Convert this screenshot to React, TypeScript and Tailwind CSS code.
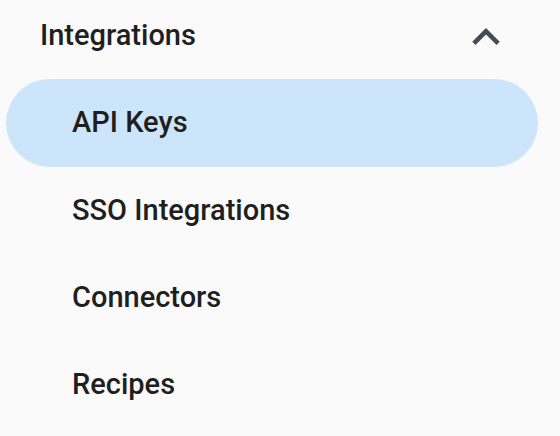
const items = ["API Keys", "SSO Integrations", "Connectors", "Recipes"];

function ExpandLess() {
  return (
    <svg viewBox="6 8 12 7.41" className="h-[17px] w-[28px]" fill="#474c54">
      <path d="M12 8l-6 6 1.41 1.41L12 10.83l4.59 4.58L18 14z" />
    </svg>
  );
}

export default function App() {
  const active = "API Keys";

  return (
    <div className="h-[436px] w-[560px] overflow-hidden bg-[#fafafa] font-['Roboto',sans-serif] text-[#1f1f1f]">
      <div className="flex h-[72px] items-center justify-between pl-[40px] pr-[60px]">
        <span className="text-[29px] font-medium">Integrations</span>
        <ExpandLess />
      </div>
      <ul className="flex flex-col pt-[7px]">
        {items.map((item) => (
          <li
            key={item}
            className={
              item === active
                ? "ml-[6px] mr-[22px] flex h-[88px] items-center rounded-full bg-[#cce5fb] pl-[66px] text-[29px] font-medium"
                : "ml-[6px] mr-[22px] flex h-[87px] items-center pl-[66px] text-[29px] font-medium"
            }
          >
            {item}
          </li>
        ))}
      </ul>
    </div>
  );
}
